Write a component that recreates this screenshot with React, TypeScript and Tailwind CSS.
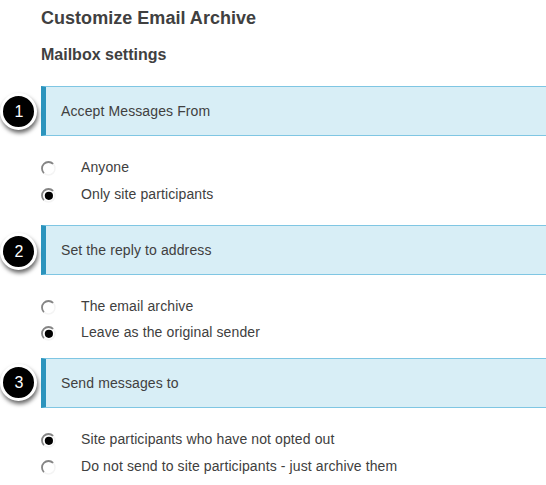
type Option = { label: string; checked?: boolean; row: string };
type Section = { step: number; title: string; box: string; badge: string; options: Option[] };

const sections: Section[] = [
  {
    step: 1,
    title: "Accept Messages From",
    box: "mt-[22px]",
    badge: "top-[6px]",
    options: [
      { label: "Anyone", row: "mt-[18px] h-[27px]" },
      { label: "Only site participants", checked: true, row: "h-[27px]" },
    ],
  },
  {
    step: 2,
    title: "Set the reply to address",
    box: "mt-[17px]",
    badge: "top-[7px]",
    options: [
      { label: "The email archive", row: "mt-[18px] h-[26px]" },
      { label: "Leave as the original sender", checked: true, row: "h-[27px]" },
    ],
  },
  {
    step: 3,
    title: "Send messages to",
    box: "mt-[12px]",
    badge: "top-[5px]",
    options: [
      { label: "Site participants who have not opted out", checked: true, row: "mt-[18px] h-[27px]" },
      { label: "Do not send to site participants - just archive them", row: "h-[27px]" },
    ],
  },
];

function Radio({ checked }: { checked?: boolean }) {
  return (
    <svg className="mt-[7px] h-4 w-10 shrink-0" viewBox="0 0 40 16" fill="none">
      <circle cx="7.5" cy="7.5" r="6.5" stroke="#f4f4f4" strokeWidth="1.5" />
      <path d="M2.9 12.1A6.5 6.5 0 0 1 12.1 2.9" stroke="#858585" strokeWidth="1.8" />
      {checked && <circle cx="7.9" cy="7.8" r="4.1" fill="#000" />}
    </svg>
  );
}

export default function App() {
  return (
    <main className="h-[485px] w-full overflow-hidden bg-white pl-[41px] font-['Liberation_Sans',Arial,sans-serif] text-sm tracking-[0.11px] text-[#404040]">
      <h1 className="pt-[7px] text-[18px] leading-[22px] font-bold tracking-[0.03px]">Customize Email Archive</h1>
      <h2 className="mt-[16px] text-[16px] leading-[20px] font-bold tracking-normal">Mailbox settings</h2>
      <div className="-mt-px">
        {sections.map((s) => (
          <section key={s.step}>
            <div className={`relative flex h-[50px] items-center border-y border-l-[5px] border-y-[#7fc6e3] border-l-[#2c94bd] bg-[#d8eef6] pl-[15px] ${s.box}`}>
              <span className={`absolute -left-[46px] flex size-[37px] items-center justify-center rounded-full border-[3px] border-white bg-black pt-0.5 pl-px text-[16px] text-white shadow-[1px_3px_4px_rgba(0,0,0,0.6)] ${s.badge}`}>
                {s.step}
              </span>
              <span className="whitespace-nowrap">{s.title}</span>
            </div>
            {s.options.map((o) => (
              <div key={o.label} className={`flex ${o.row}`}>
                <Radio checked={o.checked} />
                <span className="whitespace-nowrap leading-[27px]">{o.label}</span>
              </div>
            ))}
          </section>
        ))}
      </div>
    </main>
  );
}
